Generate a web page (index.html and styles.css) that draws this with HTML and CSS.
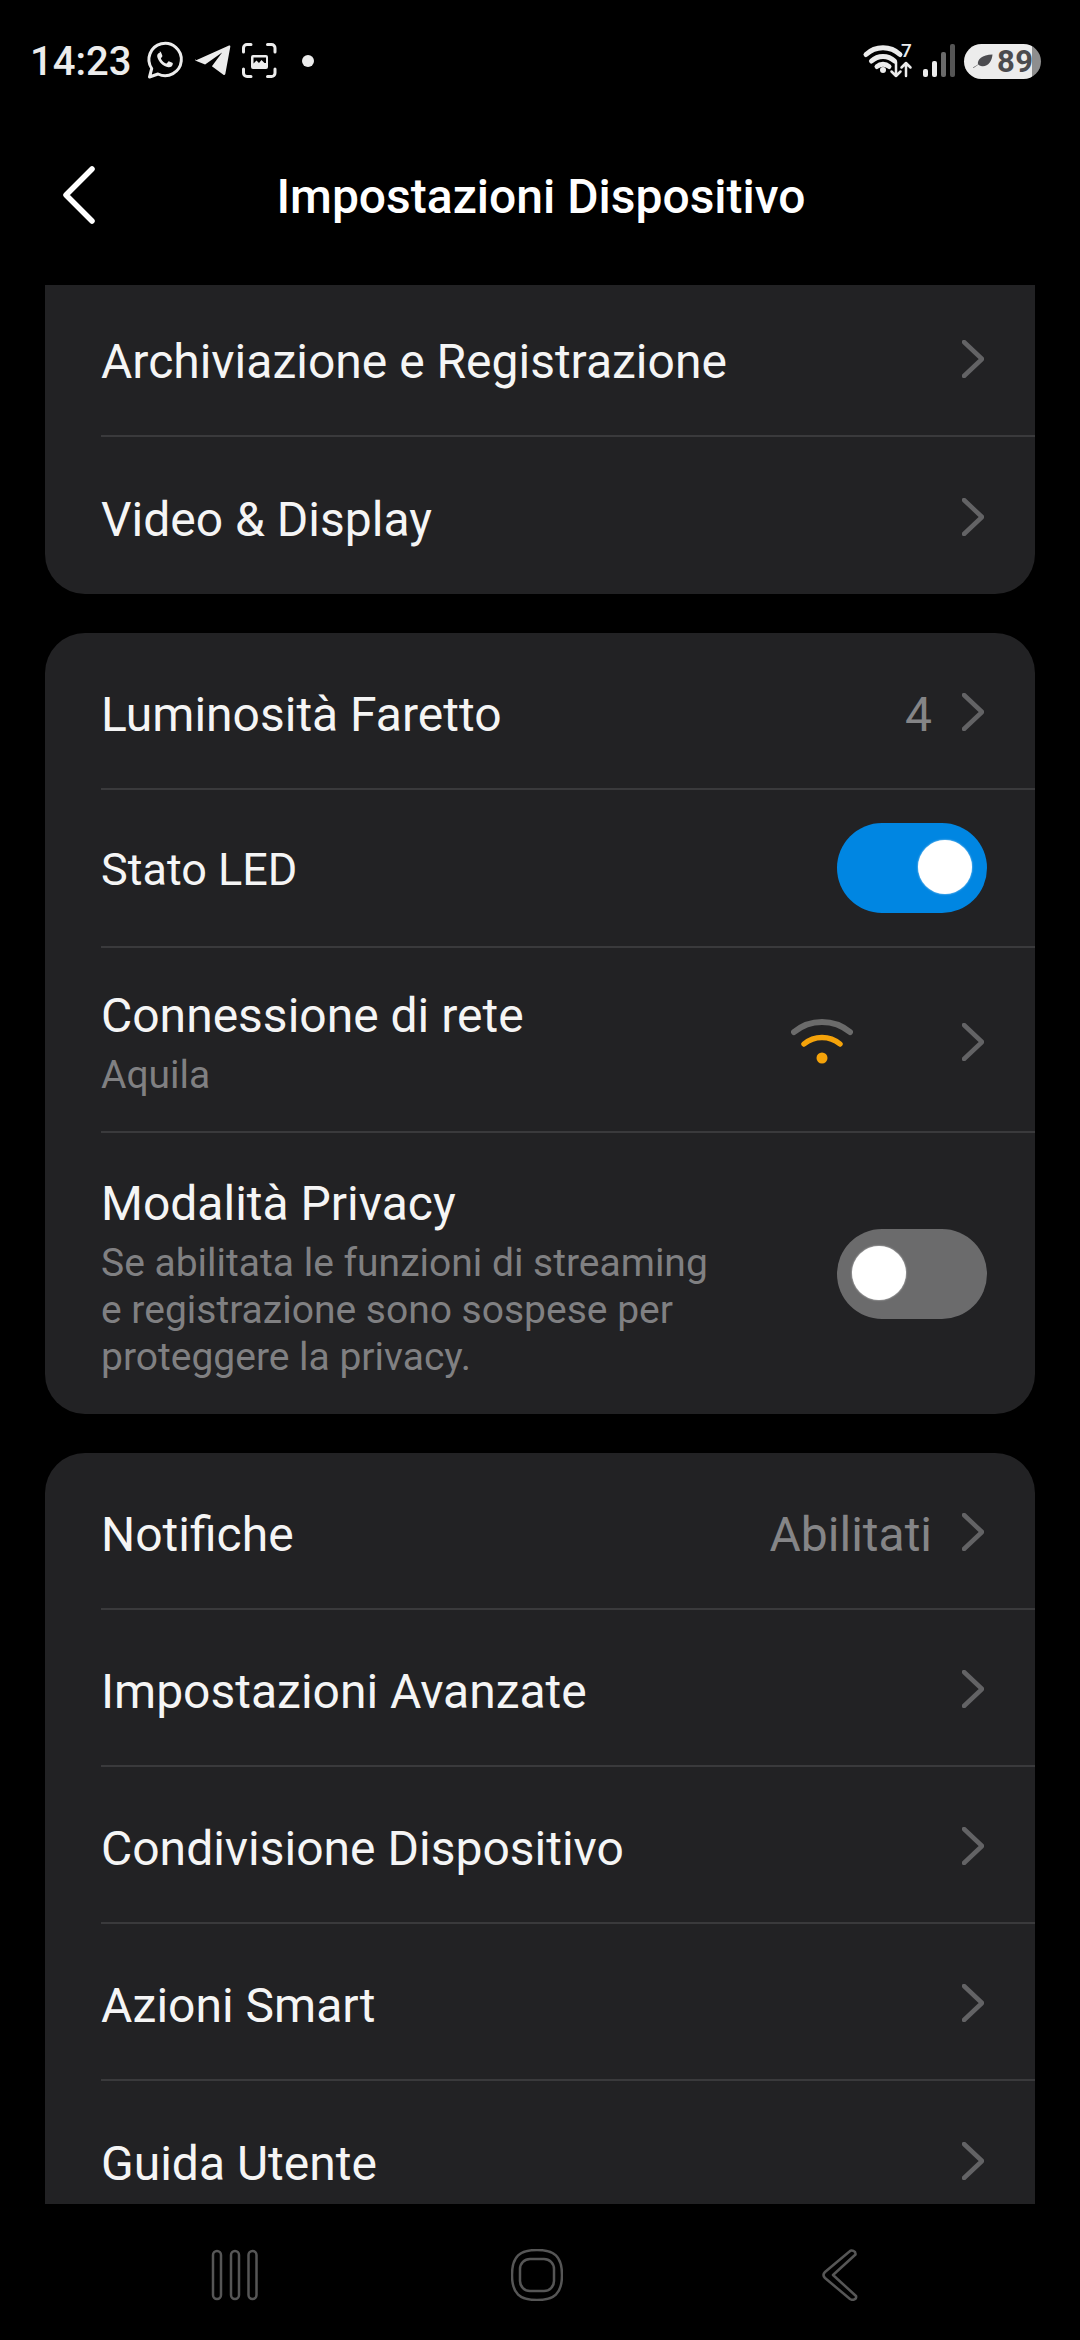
FILE: index.html
```html
<!DOCTYPE html>
<html lang="it">
<head>
<meta charset="utf-8">
<title>Impostazioni Dispositivo</title>
<link rel="stylesheet" href="styles.css">
</head>
<body>
<div class="phone">
  <div class="status">
    <span class="clock">14:23</span>
    <svg class="ic-whatsapp" width="36" height="36" viewBox="148 44 36 36">
      <path class="line" d="M149.500 78l2.200-8.500a16.200 16.200 0 1 1 6.300 5.500z"/>
      <path class="fill" d="M159.500 52.500c.8 0 1.200.1 1.600 1l1.200 2.900c.2.500.1 1-.2 1.400l-1 1.200c-.2.300-.2.600 0 .9 1.200 2 2.800 3.500 4.900 4.500.3.200.6.1.9-.1l1.300-1.600c.3-.4.7-.4 1.100-.3l3 1.400c.5.200.6.6.5 1.200-.2 2.100-2.200 3.600-4.400 3.300-5.200-.8-9.800-5.300-11.100-10.200-.5-2 .4-3.900 2.700-4.600z"/>
    </svg>
    <svg class="ic-telegram" width="36" height="32" viewBox="195 47 36 32">
      <path class="fill" d="M195.600 62.400L229 47.600c.8-.3 1.500.3 1.300 1.100l-5 27.400c-.2.900-1.200 1.200-1.900.7l-11.500-8.500 10.200-13.900-17 12.200-9.400-3.900c-.8-.3-.8-1.400-.1-1.800z"/>
    </svg>
    <svg class="ic-capture" width="36" height="36" viewBox="242 44 36 36">
      <path class="line" d="M243.500 53v-4a3.500 3.500 0 0 1 3.500-3.500h4M267.500 45.500h4a3.500 3.500 0 0 1 3.500 3.500v4M275 70v4a3.500 3.500 0 0 1-3.500 3.500h-4M251 77.500h-4a3.500 3.500 0 0 1-3.500-3.500v-4"/>
      <path class="fill" fill-rule="evenodd" d="M251 58a2 2 0 0 1 2-2h13a2 2 0 0 1 2 2v10a2 2 0 0 1-2 2h-13a2 2 0 0 1-2-2zM253.500 58.500v6l3-3 2.500 2.500 2.500-3 3 3h1.500v-5.500z"/>
    </svg>
    <span class="dot"></span>
    <span class="status-gap"></span>
    <span class="wifi-wrap">
      <svg class="ic-wifi" width="50" height="36" viewBox="863 44 50 36">
        <g class="line wide">
          <path d="M866 55.500a25 25 0 0 1 34 0"/>
          <path d="M871.500 62a17 17 0 0 1 23 0"/>
          <path d="M877 67.500a9 9 0 0 1 12 0"/>
        </g>
        <circle class="fill" cx="883" cy="71" r="3"/>
        <path class="line thin" d="M896 63v14m-4.500-4.500l4.500 4.500 4.500-4.500M906 77v-13m-4.500 4.500l4.500-4.500 4.500 4.500"/>
      </svg>
      <span class="wifi-gen">7</span>
    </span>
    <svg class="ic-signal" width="32" height="34" viewBox="923 45 32 34">
      <rect class="fill" x="923" y="70" width="5" height="8" rx="2"/>
      <rect class="fill" x="932" y="62" width="5" height="16" rx="2"/>
      <rect class="bar-mid" x="941" y="53" width="5" height="25" rx="2"/>
      <rect class="bar-dim" x="950" y="45" width="5" height="33" rx="2"/>
    </svg>
    <div class="battery">
      <svg class="ic-leaf" width="20" height="14" viewBox="0 0 20 14">
        <path class="leaf" d="M0 13.500l5-3c-1-5 4-9.500 14.500-10-.5 7-5 13-11.500 11.500-1-.2-2-.8-2.500-1.500l-5 3.500z"/>
      </svg>
      <span class="battery-level">89</span>
    </div>
  </div>

  <header class="topbar">
    <button class="back" type="button" aria-label="Indietro">
      <svg width="32" height="58" viewBox="0 0 32 58">
        <path class="back-arrow" d="M29 3L3 29l26 26"/>
      </svg>
    </button>
    <h1 class="title">Impostazioni Dispositivo</h1>
  </header>

  <main class="scroller">
    <section class="card card-cut">
      <div class="row h152 tight"><span class="label">Archiviazione e Registrazione</span><svg class="chev" width="22" height="38" viewBox="0 0 22 38"><path d="M2 2l18 17L2 36"/></svg></div>
      <div class="row h157 last"><span class="label">Video &amp; Display</span><svg class="chev" width="22" height="38" viewBox="0 0 22 38"><path d="M2 2l18 17L2 36"/></svg></div>
    </section>

    <section class="card">
      <div class="row h157"><span class="label">Luminosità Faretto</span><span class="value">4</span><svg class="chev" width="22" height="38" viewBox="0 0 22 38"><path d="M2 2l18 17L2 36"/></svg></div>
      <div class="row h158 tight"><span class="label small">Stato LED</span><span class="toggle on"><span class="knob"></span></span></div>
      <div class="row h185 pad-network">
        <div class="stack">
          <span class="label">Connessione di rete</span>
          <span class="sub">Aquila</span>
        </div>
        <svg class="net" width="62" height="46" viewBox="790 1018 62 46">
          <path class="arc-off" d="M793 1032a44 44 0 0 1 56 0"/>
          <path class="arc-on" d="M803 1044a28 28 0 0 1 36 0"/>
          <circle class="dot-on" cx="821" cy="1058" r="5.500"/>
        </svg>
        <svg class="chev" width="22" height="38" viewBox="0 0 22 38"><path d="M2 2l18 17L2 36"/></svg>
      </div>
      <div class="row h281 last pad-privacy">
        <div class="stack">
          <span class="label">Modalità Privacy</span>
          <span class="sub">Se abilitata le funzioni di streaming<br>e registrazione sono sospese per<br>proteggere la privacy.</span>
        </div>
        <span class="toggle off"><span class="knob"></span></span>
      </div>
    </section>

    <section class="card card-open">
      <div class="row h157"><span class="label">Notifiche</span><span class="value">Abilitati</span><svg class="chev" width="22" height="38" viewBox="0 0 22 38"><path d="M2 2l18 17L2 36"/></svg></div>
      <div class="row h157"><span class="label">Impostazioni Avanzate</span><svg class="chev" width="22" height="38" viewBox="0 0 22 38"><path d="M2 2l18 17L2 36"/></svg></div>
      <div class="row h157"><span class="label">Condivisione Dispositivo</span><svg class="chev" width="22" height="38" viewBox="0 0 22 38"><path d="M2 2l18 17L2 36"/></svg></div>
      <div class="row h157"><span class="label">Azioni Smart</span><svg class="chev" width="22" height="38" viewBox="0 0 22 38"><path d="M2 2l18 17L2 36"/></svg></div>
      <div class="row h157 last"><span class="label">Guida Utente</span><svg class="chev" width="22" height="38" viewBox="0 0 22 38"><path d="M2 2l18 17L2 36"/></svg></div>
    </section>
  </main>

  <nav class="navbar">
    <svg width="50" height="52" viewBox="0 0 50 52">
      <g class="nav-line">
        <rect x="3" y="2" width="8" height="48" rx="4"/>
        <rect x="21" y="2" width="8" height="48" rx="4"/>
        <rect x="38.500" y="2" width="8" height="48" rx="4"/>
      </g>
    </svg>
    <svg class="nav-home" width="52" height="52" viewBox="0 0 52 52">
      <g class="nav-line">
        <path d="M26 1c17 0 25 6 25 25s-8 25-25 25S1 45 1 26 9 1 26 1z"/>
        <rect x="9" y="10" width="34" height="32" rx="10"/>
      </g>
    </svg>
    <svg width="36" height="52" viewBox="0 0 36 52">
      <path class="nav-line" d="M27.500 2.500c2-2 6.500-.5 6 3L11 26l23 21c1 3-3 5-6 3L3 29c-2-2-2-4 0-6z"/>
    </svg>
  </nav>
</div>
</body>
</html>
```

FILE: styles.css
```css
* {
  box-sizing: border-box;
}

html,
body {
  margin: 0;
  padding: 0;
  background: #000;
}

.phone {
  width: 1080px;
  height: 2340px;
  display: flex;
  flex-direction: column;
  overflow: hidden;
  background: #000;
  font-family: Roboto, "Noto Sans", sans-serif;
  color: #f4f4f4;
}

/* status bar */
.status {
  height: 122px;
  flex: none;
  display: flex;
  align-items: center;
  padding: 0 39px 0 30px;
}

.clock {
  width: 118px;
  font-size: 40px;
  font-weight: 500;
  color: #ececec;
}

.status svg {
  flex: none;
  display: block;
  overflow: visible;
}

.fill {
  fill: #ececec;
}

.line {
  fill: none;
  stroke: #ececec;
  stroke-width: 3;
  stroke-linecap: round;
  stroke-linejoin: round;
}

.line.wide {
  stroke-width: 5;
}

.line.thin {
  stroke-width: 2.500;
}

.ic-telegram {
  margin-left: 11px;
}

.ic-capture {
  margin-left: 11px;
}

.dot {
  width: 12px;
  height: 12px;
  margin-left: 24px;
  border-radius: 50%;
  background: #ececec;
}

.status-gap {
  flex: 1;
}

.wifi-wrap {
  position: relative;
  width: 50px;
  height: 36px;
  display: block;
}

.wifi-gen {
  position: absolute;
  left: 38px;
  top: -2px;
  font-size: 19px;
  line-height: 19px;
  font-weight: 500;
  color: #ececec;
}

.ic-signal {
  margin-left: 10px;
}

.bar-mid {
  fill: #6a6a6a;
}

.bar-dim {
  fill: #555;
}

.battery {
  width: 77px;
  height: 35px;
  margin-left: 9px;
  display: flex;
  align-items: center;
  padding-left: 9px;
  border-radius: 18px;
  background: linear-gradient(to right, #ececec 68px, #8e8e8e 68px);
}

.leaf {
  fill: #4b4b4f;
}

.battery-level {
  margin-left: 4px;
  font-size: 31px;
  line-height: 35px;
  font-weight: 700;
  letter-spacing: 0.5px;
  color: #4b4b4f;
}

/* page header */
.topbar {
  position: relative;
  height: 163px;
  flex: none;
  padding-bottom: 15px;
  display: flex;
  align-items: center;
  justify-content: center;
}

.back {
  position: absolute;
  left: 63px;
  top: 44px;
  padding: 0;
  border: 0;
  background: none;
  display: block;
}

.back svg {
  display: block;
}

.back-arrow {
  fill: none;
  stroke: #fff;
  stroke-width: 5.500;
  stroke-linecap: round;
  stroke-linejoin: round;
}

.title {
  margin: 0 0 0 2px;
  font-size: 48px;
  font-weight: 500;
  color: #fff;
}

/* settings list */
.scroller {
  height: 1919px;
  flex: none;
  overflow: hidden;
  padding: 0 45px;
  display: flex;
  flex-direction: column;
  gap: 39px;
}

.card {
  flex: none;
  border-radius: 40px;
  background: #222224;
}

.card-cut {
  border-radius: 0 0 40px 40px;
}

.card-open {
  border-radius: 40px 40px 0 0;
}

.row {
  display: flex;
  align-items: center;
  margin-left: 56px;
  padding: 8px 51px 0 0;
  border-bottom: 2px solid #3a3a3c;
}

.row.last {
  border-bottom: 0;
}

.row.tight {
  padding-top: 4px;
}

.row.pad-network {
  padding-top: 10px;
}

.row.pad-privacy {
  padding-top: 11px;
}

.h152 { height: 152px; }
.h157 { height: 157px; }
.h158 { height: 158px; }
.h185 { height: 185px; }
.h281 { height: 281px; }

.label {
  font-size: 48px;
  line-height: 52px;
  color: #f5f5f5;
  display: block;
}

.label.small {
  font-size: 45px;
}

.stack {
  display: flex;
  flex-direction: column;
}

.sub {
  display: block;
  margin-top: 10px;
  font-size: 39px;
  line-height: 47px;
  color: #808082;
}

.value {
  margin-left: auto;
  margin-right: 30px;
  font-size: 48px;
  line-height: 52px;
  color: #858587;
}

.chev {
  flex: none;
  display: block;
  margin-left: auto;
  margin-top: -6px;
  fill: none;
  stroke: #636365;
  stroke-width: 4.500;
  stroke-linecap: round;
  stroke-linejoin: round;
}

.value + .chev {
  margin-left: 0;
}

.net {
  flex: none;
  margin-left: auto;
  margin-top: -7px;
  display: block;
  fill: none;
  stroke-linecap: round;
}

.net + .chev {
  margin-left: 109px;
}

.arc-off {
  stroke: #6b6b6b;
  stroke-width: 6;
}

.arc-on {
  stroke: #f5a30a;
  stroke-width: 5.500;
}

.dot-on {
  fill: #f5a30a;
}

/* switches */
.toggle {
  position: relative;
  flex: none;
  display: block;
  width: 150px;
  height: 90px;
  margin: 0 -3px 0 auto;
  border-radius: 45px;
}

.toggle.on {
  margin-top: -4px;
  background: #0086e2;
}

.toggle.off {
  margin-top: -11px;
  background: #6b6b6c;
}

.knob {
  position: absolute;
  top: 17px;
  width: 54px;
  height: 54px;
  border-radius: 50%;
  background: #fff;
  box-shadow: 0 0 2px rgba(255, 255, 255, 0.8);
}

.toggle.on .knob {
  left: 81px;
}

.toggle.off .knob {
  left: 15px;
}

/* system navigation */
.navbar {
  flex: 1;
  display: flex;
  align-items: center;
  justify-content: space-between;
  padding: 6px 222px 0 210px;
}

.navbar svg {
  display: block;
}

.nav-home {
  margin-right: 8px;
}

.nav-line {
  fill: none;
  stroke: #565656;
  stroke-width: 2.500;
  stroke-linejoin: round;
}
```
